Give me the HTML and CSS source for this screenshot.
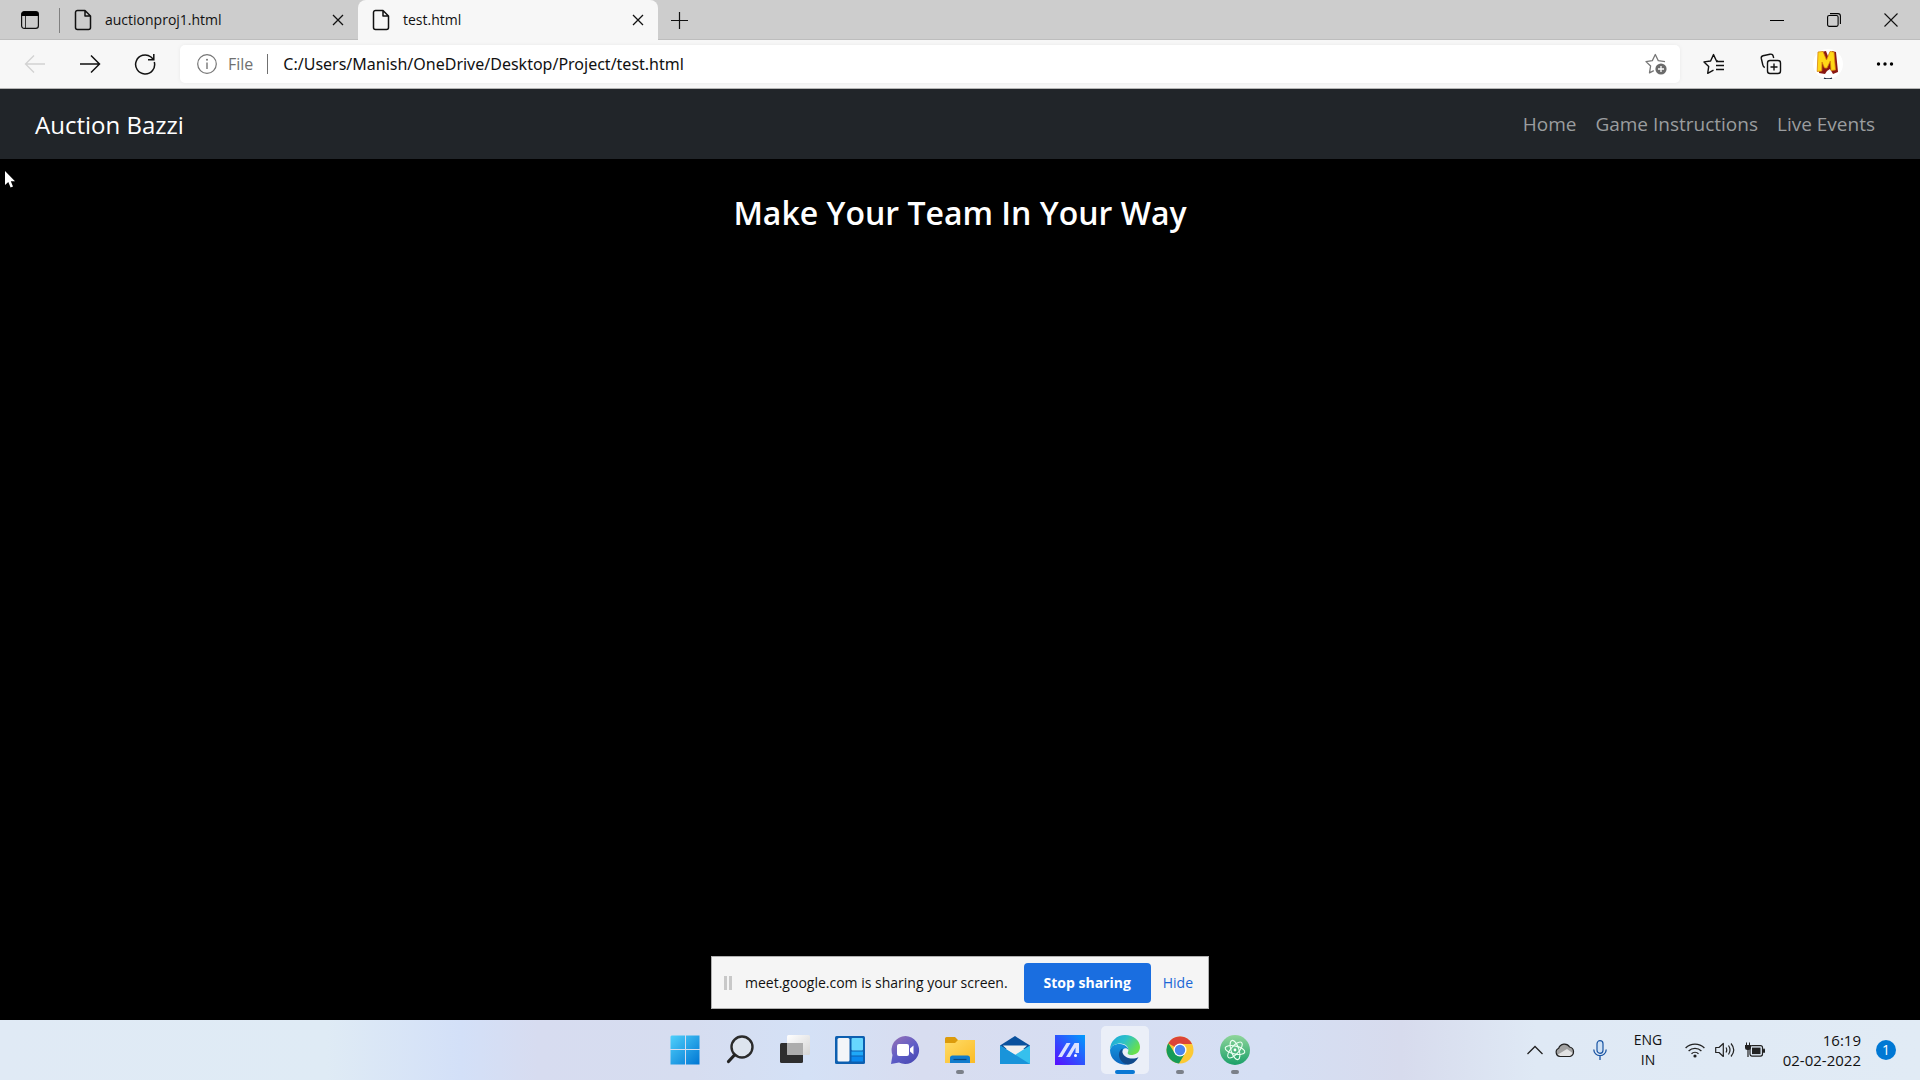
FILE: index.html
```html
<!DOCTYPE html>
<html lang="en">
<head>
<meta charset="utf-8">
<title>test.html</title>
<link rel="stylesheet" href="styles.css">
</head>
<body>
<div class="desktop">
  <header class="tabstrip">
    <button class="tab-actions" aria-label="Tab actions menu">
      <svg width="20" height="20" viewBox="0 0 20 20"><rect x="1.6" y="1.6" width="16.8" height="16.8" rx="2.6" fill="none" stroke="#111" stroke-width="1.2"/><path d="M1.5 6V4A2.6 2.6 0 0 1 4 1.500H16A2.600 2.600 0 0 1 18.500 4V6Z" fill="#000"/><path d="M5.500 6V18" stroke="#333" stroke-width="1"/></svg>
    </button>
    <span class="tab-divider"></span>
    <div class="tab">
      <svg class="page-icon" width="18" height="22" viewBox="0 0 18 22"><path d="M3.500 1.500H11L16.500 7V18.500A2 2 0 0 1 14.500 20.500H3.500A2 2 0 0 1 1.500 18.500V3.500A2 2 0 0 1 3.500 1.500ZM11 1.500V7H16.500" fill="none" stroke="#111" stroke-width="1.500" stroke-linejoin="round"/></svg>
      <a class="tab-title" href="#">auctionproj1.html</a>
      <button class="tab-close" aria-label="Close tab"><svg width="12" height="12" viewBox="0 0 12 12"><path d="M1 1 11 11M11 1 1 11" stroke="#111" stroke-width="1.300"/></svg></button>
    </div>
    <div class="tab tab-active">
      <svg class="page-icon" width="18" height="22" viewBox="0 0 18 22"><path d="M3.500 1.500H11L16.500 7V18.500A2 2 0 0 1 14.500 20.500H3.500A2 2 0 0 1 1.500 18.500V3.500A2 2 0 0 1 3.500 1.500ZM11 1.500V7H16.500" fill="none" stroke="#111" stroke-width="1.500" stroke-linejoin="round"/></svg>
      <a class="tab-title" href="#">test.html</a>
      <button class="tab-close" aria-label="Close tab"><svg width="12" height="12" viewBox="0 0 12 12"><path d="M1 1 11 11M11 1 1 11" stroke="#111" stroke-width="1.300"/></svg></button>
    </div>
    <button class="new-tab" aria-label="New tab"><svg width="18" height="18" viewBox="0 0 18 18"><path d="M9.500 1V18M1 9.500H18" stroke="#111" stroke-width="1.200"/></svg></button>
    <div class="window-controls">
      <button aria-label="Minimise"><svg width="14" height="14" viewBox="0 0 14 14"><path d="M0 7.500H14" stroke="#000"/></svg></button>
      <button aria-label="Restore"><svg width="14" height="14" viewBox="0 0 14 14"><rect x=".6" y="2.500" width="10.500" height="10.900" rx="1.600" fill="none" stroke="#000" stroke-width="1.100"/><path d="M3 .6H11A2.400 2.400 0 0 1 13.400 3V11" fill="none" stroke="#000" stroke-width="1.100"/></svg></button>
      <button aria-label="Close"><svg width="14" height="14" viewBox="0 0 14 14"><path d="M.5.500 13.500 13.500M13.500.500.500 13.500" stroke="#111" stroke-width="1.100"/></svg></button>
    </div>
  </header>

  <div class="toolbar">
    <button class="tool" aria-label="Back"><svg width="22" height="22" viewBox="0 0 22 22"><path d="M21 11H1.500M10 2.500 1.500 11 10 19.500" fill="none" stroke="#d2d2d2" stroke-width="1.300"/></svg></button>
    <button class="tool" aria-label="Forward"><svg width="22" height="22" viewBox="0 0 22 22"><path d="M1 11H20.500M12 2.500 20.500 11 12 19.500" fill="none" stroke="#111" stroke-width="1.500"/></svg></button>
    <button class="tool" aria-label="Refresh"><svg width="22" height="22" viewBox="0 0 22 22"><path d="M20.300 9A9.500 9.500 0 1 1 17 4L19.500 6.500M19.800 1V6.800H14" fill="none" stroke="#111" stroke-width="1.500"/></svg></button>
    <div class="address">
      <svg width="20" height="20" viewBox="0 0 20 20"><circle cx="10" cy="10" r="9.300" fill="none" stroke="#767676" stroke-width="1.200"/><path d="M10 8.500V15" stroke="#767676" stroke-width="1.400"/><circle cx="10" cy="5.800" r="1" fill="#767676"/></svg>
      <label class="scheme" for="url">File</label>
      <span class="address-divider"></span>
      <input class="url" id="url" type="text" value="C:/Users/Manish/OneDrive/Desktop/Project/test.html">
      <button class="fav-add" aria-label="Add to favourites"><svg width="22" height="22" viewBox="0 0 22 22"><path d="M20 8.600 13.300 7.700 10.300 1.500 7.300 7.700 1 8.600 5.600 13 4.500 19.800 8.800 17.600" fill="none" stroke="#767676" stroke-width="1.300" stroke-linejoin="round"/><circle cx="16" cy="16" r="5.600" fill="#6b6b6b"/><path d="M16 13V19M13 16H19" stroke="#fff" stroke-width="1.300"/></svg></button>
    </div>
    <button class="tool tool-wide" aria-label="Favourites"><svg width="22" height="22" viewBox="0 0 22 22"><path d="M15 8H13.500L10.500 1.600 7.600 8 1 8.900 5.700 13.500 4.700 20.300 10.500 17.200M13 8.500H21M13 12.500H21M13 16.500H21" fill="none" stroke="#111" stroke-width="1.400" stroke-linejoin="round"/></svg></button>
    <button class="tool tool-wide" aria-label="Collections"><svg width="22" height="22" viewBox="0 0 22 22"><rect x="7.500" y="7.500" width="13" height="13" rx="2.500" fill="none" stroke="#111" stroke-width="1.400"/><path d="M14 10.500V17.500M10.500 14H17.500M4.800 14.500C3 14 3 13 2.600 11L1.300 5.500C1 4 1.500 3.200 3 2.800L10 1.200C12.500.700 13 2 13.700 5" fill="none" stroke="#111" stroke-width="1.400"/></svg></button>
    <button class="tool tool-wide" aria-label="Profile"><svg width="30" height="30" viewBox="0 0 30 30"><circle cx="15" cy="15" r="15" fill="#fff"/><path d="M8 3 13 2 16 10 19 2 23 3 25 23 20 25 17 20 14 22 12 25 6 24Z" fill="#8b1712"/><path d="M5 3 10 2.500 13.500 11 17 2.500 21 3 22.500 21 18 21.500 17.300 12 14 19 11.500 19 9 13 8.800 22 4.200 22.500Z" fill="#ffd817" stroke="#d7840d" stroke-width=".8"/><path d="M11 29Q15 31 19 29" stroke="#142038" stroke-width="1.300" fill="none"/></svg></button>
    <button class="tool tool-wide" aria-label="Settings and more"><svg width="18" height="6" viewBox="0 0 18 6"><circle cx="2.500" cy="3" r="1.700"/><circle cx="9" cy="3" r="1.700"/><circle cx="15.500" cy="3" r="1.700"/></svg></button>
  </div>

  <nav class="navbar">
    <a class="brand" href="#">Auction Bazzi</a>
    <div class="nav-links"><a href="#">Home</a><a href="#">Game Instructions</a><a href="#">Live Events</a></div>
  </nav>

  <main class="page">
    <h1>Make Your Team In Your Way</h1>
    <svg class="cursor" width="14" height="20" viewBox="0 0 14 20"><path d="M1 1V15L4.300 12 6.600 17.500 9 16.500 6.800 11.300H11Z" fill="#fff"/></svg>
    <div class="share-bar">
      <span class="grip"></span>
      <span class="share-text">meet.google.com is sharing your screen.</span>
      <button class="stop">Stop sharing</button>
      <button class="hide">Hide</button>
    </div>
  </main>

  <footer class="taskbar">
    <div class="apps">
      <button class="app" aria-label="Start"><svg width="30" height="30" viewBox="0 0 30 30"><defs><linearGradient id="win" x1="0" y1="0" x2="1" y2="1"><stop offset="0" stop-color="#4fd0fb"/><stop offset="1" stop-color="#0076d3"/></linearGradient></defs><path d="M1.500 .500H15V14H.500V1.500ZM16 .500H29.500V14H16ZM.500 15H15V29.500H.500ZM16 15H29.500V29.500H16Z" fill="url(#win)"/></svg></button>
      <button class="app" aria-label="Search"><svg width="30" height="30" viewBox="0 0 30 30"><circle cx="17" cy="12" r="10.500" fill="#dde4ee" stroke="#2b2b2b" stroke-width="2.400"/><path d="M9.500 20 3.500 26.500" stroke="#222" stroke-width="3.200" stroke-linecap="round"/></svg></button>
      <button class="app" aria-label="Task view"><svg width="30" height="30" viewBox="0 0 30 30"><defs><linearGradient id="tv" x1="0" y1="0" x2="1" y2="1"><stop offset="0" stop-color="#fff"/><stop offset="1" stop-color="#d5d5d5"/></linearGradient></defs><rect x="0" y="8" width="23" height="20" rx="1.500" fill="#2e2e2e"/><rect x="7" y="0" width="23" height="20" rx="1.500" fill="url(#tv)"/><path d="M7 8H23V20H8.500A1.500 1.500 0 0 1 7 18.500Z" fill="#adadad"/></svg></button>
      <button class="app" aria-label="Widgets"><svg width="30" height="30" viewBox="0 0 30 30"><rect y="1" width="30" height="28" rx="1.500" fill="#0d5fb0"/><rect x="2.500" y="3" width="12" height="23.500" rx="1.500" fill="#f3f5f8"/><rect x="16.500" y="3" width="11.500" height="12.500" rx="1" fill="#67d7ff"/><rect x="16.500" y="16.500" width="11.500" height="4" fill="#1fa9f8"/><rect x="16.500" y="21.500" width="11.500" height="5" fill="#0a89ee"/></svg></button>
      <button class="app" aria-label="Chat"><svg width="30" height="30" viewBox="0 0 30 30"><defs><linearGradient id="chat" x1="0" y1="0" x2=".7" y2="1"><stop offset="0" stop-color="#9b72b4"/><stop offset=".6" stop-color="#5e5dc7"/><stop offset="1" stop-color="#4b4bb5"/></linearGradient></defs><path d="M15.500 1A14 14 0 1 1 9 27.600L1 29 2.500 20A14 14 0 0 1 15.500 1Z" fill="url(#chat)"/><rect x="7" y="9" width="12" height="12" rx="2" fill="#fff"/><path d="M20 13.500 23.500 10.500V19.500L20 16.500Z" fill="#fff"/></svg></button>
      <button class="app app-running" aria-label="File Explorer"><svg width="30" height="30" viewBox="0 0 30 30"><defs><linearGradient id="fold" x1="0" y1="0" x2="1" y2="1"><stop offset="0" stop-color="#ffdc68"/><stop offset="1" stop-color="#fbbb25"/></linearGradient></defs><path d="M0 3.500A1.500 1.500 0 0 1 1.500 2H10L13 5H28.500A1.500 1.500 0 0 1 30 6.500V10H0Z" fill="#dc9b0c"/><path d="M0 8H10L13 5H30V28H0Z" fill="url(#fold)"/><path d="M5 28V23A2.500 2.500 0 0 1 7.500 20.500H22.500A2.500 2.500 0 0 1 25 23V28Z" fill="#127ccd"/><path d="M8.500 24.500H21.500" stroke="#0a467f" stroke-width="1.200"/></svg></button>
      <button class="app" aria-label="Mail"><svg width="30" height="30" viewBox="0 0 30 30"><path d="M0 10.500 15 1 30 10.500V14H0Z" fill="#0a519d"/><path d="M3 10.500H27L15 22Z" fill="#f0f0f0"/><path d="M0 10.500 15 20 30 10.500V29H0Z" fill="#36c0ed"/><path d="M0 10.500 30 29H0Z" fill="#1994da"/></svg></button>
      <button class="app" aria-label="MyASUS"><svg width="30" height="30" viewBox="0 0 30 30"><defs><linearGradient id="asus" x1="1" y1="0" x2="0" y2="1"><stop offset="0" stop-color="#009cfc"/><stop offset="1" stop-color="#5a0cff"/></linearGradient></defs><rect width="30" height="30" fill="url(#asus)"/><path d="M3 22 11.500 8H15.500L7 22ZM11 22 19.500 8H24V18H20.500V12.500L15 22Z" fill="#dbe2ff"/><circle cx="20.500" cy="20.500" r="1.500" fill="#fff"/></svg></button>
      <button class="app app-current" aria-label="Microsoft Edge"><svg width="30" height="30" viewBox="0 0 30 30"><defs><linearGradient id="e1" x1="0" y1="0" x2="1" y2=".5"><stop offset="0" stop-color="#1ba5df"/><stop offset=".5" stop-color="#2cc1c8"/><stop offset="1" stop-color="#68e04d"/></linearGradient><linearGradient id="e2" x1="0" y1="0" x2="0" y2="1"><stop offset="0" stop-color="#1694dd"/><stop offset="1" stop-color="#0c66bf"/></linearGradient></defs><path d="M0 15C0 6 7 0 15 0 24 0 30 6 30 12 30 18 25 20 21 20 18 20 17 18.500 18 17 19.500 14 17 9 11 8.500 5 8.500 1 11 0 15Z" fill="url(#e1)"/><path d="M0 15C1 10.500 6 8.500 10 9 15 9.500 18 12 18.500 15 16 11.500 12 13.500 12 18 12 25 18 28.500 22 28 12 33 0 26 0 15Z" fill="url(#e2)"/><path d="M12.500 13.500C6 17 9 28 17.500 29.500 22 29.500 26 27 28.500 22 24 25 14 24 12.300 17Z" fill="#114a8b"/></svg></button>
      <button class="app app-running" aria-label="Google Chrome"><svg width="28" height="28" viewBox="0 0 28 28"><circle cx="14" cy="14" r="13.500" fill="#fcc934"/><path d="M14 14 2.300 7.200A13.500 13.500 0 0 1 26 8H14Z" fill="#dc4437"/><path d="M2.300 7.200A13.500 13.500 0 0 0 13 27.500L19.200 17 14 14 8.800 17Z" fill="#169b57"/><circle cx="14" cy="14" r="6.500" fill="#fff"/><circle cx="14" cy="14" r="5.200" fill="#4a86ee"/></svg></button>
      <button class="app app-running" aria-label="Atom"><svg width="30" height="30" viewBox="0 0 30 30"><defs><linearGradient id="atom" x1="0" y1="0" x2="0" y2="1"><stop offset="0" stop-color="#90d69b"/><stop offset="1" stop-color="#1aa069"/></linearGradient></defs><circle cx="15" cy="15" r="15" fill="url(#atom)"/><g fill="none" stroke="#ecfff2" stroke-width="1.100"><ellipse cx="15" cy="15" rx="4" ry="10" transform="rotate(-18 15 15)"/><ellipse cx="15" cy="15" rx="4" ry="10" transform="rotate(42 15 15)"/><ellipse cx="15" cy="15" rx="4" ry="10" transform="rotate(102 15 15)"/></g><circle cx="15" cy="15" r="1.400" fill="#fff"/></svg></button>
    </div>
    <div class="tray">
      <button class="tray-item" aria-label="Show hidden icons"><svg width="16" height="10" viewBox="0 0 16 10"><path d="M.500 9 8 1.500 15.500 9" fill="none" stroke="#222" stroke-width="1.300"/></svg></button>
      <button class="tray-item cloud" aria-label="OneDrive"><svg width="20" height="16" viewBox="0 0 20 16"><path d="M5 14.500A4.300 4.300 0 0 1 3.700 6.300 6 6 0 0 1 14.600 5 4.900 4.900 0 0 1 15 14.500Z" fill="#a2a2a2"/><path d="M2 13 12 7 19 12 15 14.500H5Z" fill="#e2e2e2"/><path d="M5 14.500A4.300 4.300 0 0 1 3.700 6.300 6 6 0 0 1 14.600 5 4.900 4.900 0 0 1 15 14.500Z" fill="none" stroke="#222" stroke-width="1.200"/></svg></button>
      <button class="tray-item mic" aria-label="Microphone in use"><svg width="14" height="20" viewBox="0 0 14 20"><rect x="4" y=".7" width="6" height="12.600" rx="3" fill="#cfe1f5" stroke="#1a55a4" stroke-width="1.200"/><path d="M.8 9.500A6.200 6.200 0 0 0 13.200 9.500M7 16V20" fill="none" stroke="#1a55a4" stroke-width="1.300"/></svg></button>
      <button class="language">ENG<br>IN</button>
      <button class="status" aria-label="Network, volume and battery">
        <svg width="20" height="16" viewBox="0 0 20 16"><path d="M.600 6A13.500 13.500 0 0 1 19.400 6M3.600 9A9.300 9.300 0 0 1 16.400 9M6.500 11.700A5.200 5.200 0 0 1 13.500 11.700" fill="none" stroke="#222" stroke-width="1.300"/><circle cx="10" cy="14" r="1.600" fill="#222"/></svg>
        <svg width="20" height="16" viewBox="0 0 20 16"><path d="M.700 5.500H4L8.300 1.500V14.500L4 10.500H.700Z" fill="none" stroke="#222" stroke-width="1.200" stroke-linejoin="round"/><path d="M11 5.500Q12.500 8 11 10.500M13.500 3.500Q16.500 8 13.500 12.500M16 1.500Q21.500 8 16 14.500" fill="none" stroke="#222" stroke-width="1.200"/></svg>
        <svg width="20" height="16" viewBox="0 0 20 16"><rect x="5" y="3.600" width="12.500" height="10.500" rx="2" fill="none" stroke="#222" stroke-width="1.200"/><rect x="7" y="5.600" width="8.500" height="6.500" fill="#222"/><rect x="18" y="6.500" width="2" height="4.500" rx="1" fill="#222"/><path d="M0 3H6V6Q6 8 3.600 8V15H2.400V8Q0 8 0 6ZM1 .5H2V3H1ZM4 .5H5V3H4Z" fill="#222"/></svg>
      </button>
      <button class="clock">16:19<br>02-02-2022</button>
      <span class="badge">1</span>
    </div>
  </footer>
</div>
</body>
</html>
```
FILE: styles.css
```css
* { box-sizing: border-box; }

body {
  margin: 0;
  font-family: "Open Sans", "Noto Sans", sans-serif;
  font-size: 14px;
  color: #111;
}

button {
  display: flex;
  align-items: center;
  justify-content: center;
  margin: 0;
  padding: 0;
  border: 0;
  background: none;
  color: inherit;
  font: inherit;
}

a { color: inherit; text-decoration: none; }
svg { display: block; flex: none; }

.desktop {
  display: flex;
  flex-direction: column;
  min-height: 100vh;
}

/* Browser tabs */
.tabstrip {
  display: flex;
  align-items: center;
  height: 40px;
  background: #cdcdcd;
  box-shadow: inset 0 -1px #bdbdbd;
}
.tab-actions { width: 59px; height: 40px; }
.tab-divider { width: 1px; height: 25px; background: #808080; }
.tab {
  display: flex;
  align-items: center;
  width: 298px;
  height: 40px;
  padding: 0 12px 0 14px;
}
.tab-active {
  width: 300px;
  background: #f7f7f7;
  border-radius: 8px 8px 0 0;
}
.tab-title {
  flex: 1;
  margin-left: 13px;
  line-height: 20px;
}
.tab-close { width: 16px; height: 16px; }
.new-tab { width: 42px; height: 40px; }
.window-controls { display: flex; margin-left: auto; padding-right: 1px; }
.window-controls button { width: 57px; height: 40px; }

/* Address bar */
.toolbar {
  display: flex;
  align-items: center;
  height: 49px;
  padding: 0 7px;
  background: #f7f7f7;
  border-bottom: 1px solid #b4b4b4;
}
.tool { width: 55px; height: 40px; }
.tool-wide { width: 57px; }
.address {
  display: flex;
  flex: 1;
  align-items: center;
  height: 38px;
  margin: 0 5px 0 8px;
  padding: 0 13px 0 17px;
  background: #fff;
  border-radius: 5px;
  box-shadow: 0 0 4px rgba(0, 0, 0, .06);
}
.scheme { margin-left: 11px; font-size: 16px; color: #707070; }
.address-divider { width: 1px; height: 20px; margin: 0 15px 0 14px; background: #707070; }
.url {
  flex: 1;
  min-width: 0;
  padding: 0;
  border: 0;
  background: none;
  font-family: "Noto Sans", "Open Sans", sans-serif;
  font-size: 16px;
  color: #111;
}

/* Site */
.navbar {
  display: flex;
  align-items: center;
  justify-content: space-between;
  height: 70px;
  padding: 0 45px 0 35px;
  background: #212529;
}
.brand { font-size: 24px; color: #fff; }
.nav-links { display: flex; gap: 19px; font-size: 19px; color: #9b9d9f; }
.page {
  position: relative;
  flex: 1;
  background: #000;
}
h1 {
  margin: 30px 0 0;
  font-size: 32px;
  line-height: 48px;
  font-weight: 600;
  text-align: center;
  color: #fff;
}
.cursor { position: absolute; left: 4px; top: 11px; }

/* Screen sharing notice */
.share-bar {
  position: absolute;
  left: 50%;
  bottom: 11px;
  display: flex;
  align-items: center;
  width: 498px;
  height: 53px;
  padding: 0 15px 0 12px;
  transform: translateX(-50%);
  background: #f5f5f5;
  border: 1px solid #b0b0b0;
  white-space: nowrap;
}
.grip {
  width: 8px;
  height: 14px;
  border: solid #c8c8c8;
  border-width: 0 3px;
}
.share-text { flex: 1; margin-left: 13px; }
.stop {
  width: 127px;
  height: 40px;
  border-radius: 4px;
  background: #1a6ee0;
  color: #fff;
  font-weight: 700;
}
.hide { margin-left: 12px; color: #1a66d6; }

/* Taskbar */
.taskbar {
  display: grid;
  grid-template-columns: 1fr auto 1fr;
  align-items: center;
  height: 60px;
  background: linear-gradient(90deg, #e0eaf5 0%, #dfebf5 17%, #d3e0f8 24%, #d7dcf0 28%, #d6ddf0 36%, #d4e1f6 42%, #d8ddf0 48%, #d5dff4 66%, #d7dbed 73%, #dfe9f5 80%, #e1ebf5 100%);
}
.apps { display: flex; grid-column: 2; gap: 7px; }
.app {
  position: relative;
  width: 48px;
  height: 48px;
  border-radius: 5px;
}
.app-current { background: #ebeff8; }
.app-running::after,
.app-current::after {
  content: "";
  position: absolute;
  left: 50%;
  bottom: 0;
  width: 8px;
  height: 4px;
  border-radius: 2px;
  background: #7b8089;
  transform: translateX(-50%);
}
.app-current::after { width: 20px; background: #0a78d4; }
.tray {
  display: flex;
  align-items: center;
  justify-content: flex-end;
  padding-right: 24px;
  line-height: 20px;
}
.cloud { margin-left: 12px; }
.mic { margin-left: 18px; }
.language { width: 60px; margin-left: 11px; }
.status { gap: 10px; margin-left: 7px; }
.clock { width: 96px; justify-content: flex-end; font-size: 15px; text-align: right; }
.badge {
  width: 20px;
  height: 20px;
  margin-left: 15px;
  border-radius: 50%;
  background: #0078d4;
  color: #fff;
  font-size: 14px;
  text-align: center;
}
```
